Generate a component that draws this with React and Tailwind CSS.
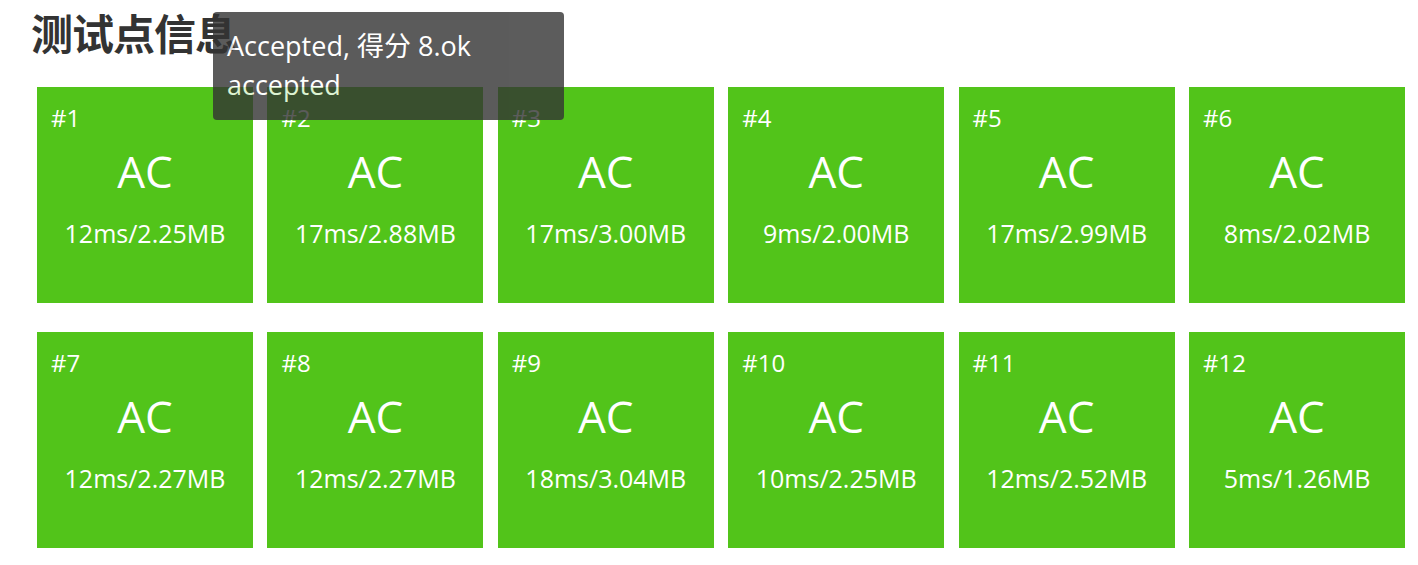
import React from "react";

const cases = [
  "12ms/2.25MB",
  "17ms/2.88MB",
  "17ms/3.00MB",
  "9ms/2.00MB",
  "17ms/2.99MB",
  "8ms/2.02MB",
  "12ms/2.27MB",
  "12ms/2.27MB",
  "18ms/3.04MB",
  "10ms/2.25MB",
  "12ms/2.52MB",
  "5ms/1.26MB",
];

export default function App() {
  return (
    <div
      className="relative w-[1418px] h-[565px] bg-white overflow-hidden"
      style={{ fontFamily: '"Open Sans", "Noto Sans CJK SC", sans-serif' }}
    >
      <h2 className="pl-[31px] pt-[9px] text-[42px] leading-[50px] tracking-[-1px] font-bold text-[#333]">
        测试点信息
      </h2>
      <div className="mt-[28px] pl-[37px] pr-[13px] grid grid-cols-6 gap-x-[14.4px] gap-y-[29px]">
        {cases.map((c, i) => (
          <div key={i} className="h-[216px] bg-[#52c41a] text-white flex flex-col">
            <div className="pl-[14px] pt-[13px] text-[24px] leading-[36px]">#{i + 1}</div>
            <div className="text-center text-[44px] leading-[66px] mt-[2px]">AC</div>
            <div className="text-center text-[25px] leading-[36px] mt-[11px]">{c}</div>
          </div>
        ))}
      </div>
      <div className="absolute left-[213px] top-[12px] w-[351px] h-[108px] rounded-[4px] bg-[#333] opacity-80 text-white pl-[14px] pt-[14px] text-[27px] leading-[39.3px]">
        <div>Accepted, 得分 8.ok</div>
        <div>accepted</div>
      </div>
    </div>
  );
}
